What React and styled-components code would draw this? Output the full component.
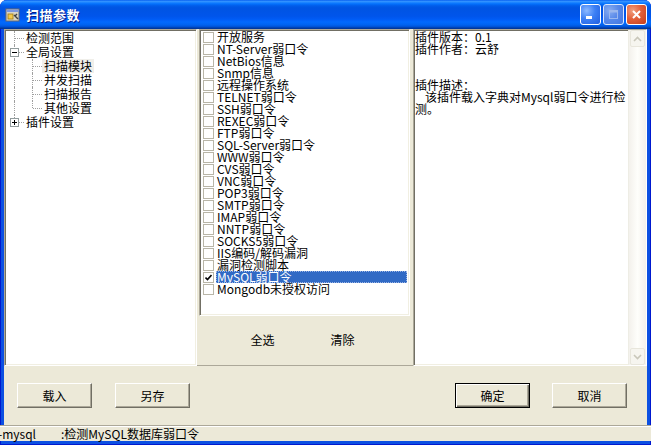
import React from 'react';
import styled, { css, createGlobalStyle } from 'styled-components';

const GlobalStyle = createGlobalStyle`
  html, body {
    margin: 0;
    padding: 0;
    background: #fff;
  }
  body {
    font-family: "Noto Sans CJK SC", "DejaVu Sans", sans-serif;
    font-size: 12px;
    color: #000;
  }
`;

const sunken = css`
  border: 1px solid;
  border-color: #aca899 #fff #fff #aca899;
  box-shadow: inset 1px 1px #716f64, inset -1px -1px #f1efe2;
`;

const Window = styled.div`
  width: 651px;
  height: 445px;
  box-sizing: border-box;
  display: flex;
  flex-direction: column;
  padding-bottom: 4px;
  background: #0c50e2;
  box-shadow: inset 1px 0 #0019cf, inset -1px 0 #0019cf, inset 0 -1px #0019cf;
  border-radius: 7px 7px 0 0;
  overflow: hidden;
`;

const TitleBar = styled.div`
  height: 29px;
  flex: none;
  display: flex;
  align-items: center;
  padding: 0 4px 0 5px;
  background: linear-gradient(
    to bottom,
    #0058ee 0%,
    #3593ff 4%,
    #288eff 7%,
    #127dff 10%,
    #036ffc 14%,
    #0262ee 18%,
    #0057e5 24%,
    #0054e3 30%,
    #0055eb 56%,
    #005bf5 66%,
    #026afe 76%,
    #0062ef 86%,
    #0052d6 92%,
    #0040ab 96%,
    #003092 100%
  );
`;

const TitleText = styled.span`
  margin-left: 5px;
  flex: 1;
  color: #fff;
  font-weight: bold;
  font-size: 13px;
  letter-spacing: 0.5px;
  text-shadow: 1px 1px #0a1883;
`;

const CapButton = styled.div`
  width: 21px;
  height: 21px;
  box-sizing: border-box;
  margin-left: 2px;
  border: 1px solid #fff;
  border-radius: 3px;
  display: flex;
  align-items: center;
  justify-content: center;
  background: ${p =>
    p.$kind === 'close'
      ? 'radial-gradient(circle at 30% 30%, #f0a080 0%, #e3603a 45%, #c33d1a 100%)'
      : p.$kind === 'off'
      ? 'radial-gradient(circle at 30% 30%, #a0bdf3 0%, #6590e8 50%, #4f7bdc 100%)'
      : 'radial-gradient(circle at 30% 30%, #8cb9ff 0%, #3c80f5 45%, #1f5ee0 100%)'};
  opacity: ${p => (p.$kind === 'off' ? 0.85 : 1)};
`;

const Client = styled.div`
  flex: 1;
  margin: 0 4px;
  background: #ece9d8;
  display: flex;
  flex-direction: column;
`;

const Panels = styled.div`
  height: 337px;
  display: flex;
`;

const TreePanel = styled.div`
  width: 193px;
  box-sizing: border-box;
  background: #fff;
  ${sunken};
  padding: 1px;
`;

const TreeRow = styled.div`
  height: 14px;
  display: flex;
  align-items: stretch;
`;

const Gutter = styled.span`
  position: relative;
  width: 18px;
  flex: none;
  &::before {
    content: '';
    display: ${p => (p.$v ? 'block' : 'none')};
    position: absolute;
    left: 8px;
    top: 0;
    height: ${p => (p.$v === 'top' ? '7px' : '14px')};
    border-left: 1px dotted #a0a0a0;
  }
  &::after {
    content: '';
    display: ${p => (p.$h ? 'block' : 'none')};
    position: absolute;
    left: 9px;
    top: 7px;
    width: 9px;
    border-top: 1px dotted #a0a0a0;
  }
`;

const Expander = styled.span`
  position: absolute;
  z-index: 1;
  left: 4px;
  top: 3px;
  width: 9px;
  height: 9px;
  box-sizing: border-box;
  background: #fff;
  border: 1px solid #919b9c;
  &::before {
    content: '';
    position: absolute;
    left: 1px;
    top: 3px;
    width: 5px;
    height: 1px;
    background: #000;
  }
  &::after {
    content: '';
    display: ${p => (p.$plus ? 'block' : 'none')};
    position: absolute;
    left: 3px;
    top: 1px;
    width: 1px;
    height: 5px;
    background: #000;
  }
`;

const TreeLabel = styled.span`
  padding: 0 2px;
  line-height: 14px;
  white-space: nowrap;
  background: ${p => (p.$selected ? '#f0efea' : 'transparent')};
`;

const MiddlePanel = styled.div`
  width: 216px;
  box-sizing: border-box;
  display: flex;
  flex-direction: column;
  padding: 0 3px 3px 2px;
  border-bottom: 1px solid #aca899;
`;

const CheckList = styled.div`
  height: 287px;
  box-sizing: border-box;
  background: #fff;
  ${sunken};
  padding: 1px 2px 1px 2px;
`;

const CheckRow = styled.div`
  height: 12px;
  display: flex;
  align-items: center;
`;

const Box = styled.span`
  width: 11px;
  height: 11px;
  flex: none;
  box-sizing: border-box;
  margin: 0 2px 0 1px;
  border: 1px solid #b9b6a8;
  background: #fff;
  display: flex;
  align-items: center;
  justify-content: center;
`;

const CheckLabel = styled.span`
  flex: 1;
  height: 12px;
  line-height: 12px;
  padding-left: 1px;
  white-space: nowrap;
  box-sizing: border-box;
  ${p =>
    p.$selected &&
    css`
      background: #316ac5;
      color: #fff;
      outline: 1px dotted #9bb4e4;
      outline-offset: -1px;
    `}
`;

const ListButtons = styled.div`
  flex: 1;
  display: flex;
  align-items: center;
  padding-left: 26px;
  gap: 5px;
`;

const FlatButton = styled.div`
  width: 75px;
  height: 25px;
  display: flex;
  align-items: center;
  justify-content: center;
`;

const InfoPanel = styled.div`
  flex: 1;
  display: flex;
  background: #fff;
  ${sunken};
`;

const InfoText = styled.div`
  flex: 1;
  padding: 1px 0 0 1px;
`;

const InfoLine = styled.div`
  height: 12px;
  line-height: 12px;
  white-space: nowrap;
  padding-left: ${p => (p.$indent ? '10px' : '0')};
`;

const ScrollBar = styled.div`
  width: 17px;
  flex: none;
  display: flex;
  flex-direction: column;
  justify-content: space-between;
  background: linear-gradient(to right, #f3f1ec, #fefefb 50%, #f3f1ec);
  border-left: 1px solid #eeede5;
`;

const ScrollArrow = styled.div`
  height: 17px;
  box-sizing: border-box;
  margin: 0 1px;
  border: 1px solid #e8e6dc;
  border-radius: 2px;
  background: #f6f5ef;
  display: flex;
  align-items: center;
  justify-content: center;
`;

const Footer = styled.div`
  flex: 1;
  display: flex;
  align-items: flex-start;
  padding: 17px 20px 0 13px;
`;

const PushButton = styled.div`
  width: 75px;
  height: 25px;
  box-sizing: border-box;
  display: flex;
  align-items: center;
  justify-content: center;
  margin-right: ${p => p.$gap || 0}px;
  background: #ece9d8;
  border: 1px solid;
  border-color: ${p => (p.$default ? '#000' : '#fff #716f64 #716f64 #fff')};
  box-shadow: ${p =>
    p.$default
      ? 'inset 1px 1px #fff, inset -1px -1px #716f64, inset -2px -2px #aca899'
      : 'inset -1px -1px #aca899'};
`;

const Spacer = styled.div`
  flex: 1;
`;

const StatusBar = styled.div`
  height: 16px;
  margin-left: -4px;
  padding-left: 2px;
  box-sizing: border-box;
  display: flex;
  align-items: center;
  background: #ece9d8;
  border-top: 1px solid #aca899;
  box-shadow: inset 0 1px #fff;
  white-space: pre;
`;

const StatusKey = styled.span`
  width: 63px;
  flex: none;
`;

const treeRows = [
  { label: '检测范围', gutters: [{ v: 'full', h: true }] },
  { label: '全局设置', gutters: [{ v: 'full', h: true, box: 'minus' }] },
  { label: '扫描模块', selected: true, gutters: [{ v: 'full' }, { v: 'full', h: true }] },
  { label: '并发扫描', gutters: [{ v: 'full' }, { v: 'full', h: true }] },
  { label: '扫描报告', gutters: [{ v: 'full' }, { v: 'full', h: true }] },
  { label: '其他设置', gutters: [{ v: 'full' }, { v: 'top', h: true }] },
  { label: '插件设置', gutters: [{ v: 'top', h: true, box: 'plus' }] },
];

const plugins = [
  '开放服务',
  'NT-Server弱口令',
  'NetBios信息',
  'Snmp信息',
  '远程操作系统',
  'TELNET弱口令',
  'SSH弱口令',
  'REXEC弱口令',
  'FTP弱口令',
  'SQL-Server弱口令',
  'WWW弱口令',
  'CVS弱口令',
  'VNC弱口令',
  'POP3弱口令',
  'SMTP弱口令',
  'IMAP弱口令',
  'NNTP弱口令',
  'SOCKS5弱口令',
  'IIS编码/解码漏洞',
  '漏洞检测脚本',
  'MySQL弱口令',
  'Mongodb未授权访问',
];

function AppIcon() {
  return (
    <svg width="16" height="16" viewBox="0 0 16 16">
      <rect x="1" y="2" width="13" height="12" fill="#d8d4c4" stroke="#6b6b6b" />
      <rect x="1.5" y="2.5" width="12" height="2.5" fill="#7a96df" />
      <rect x="3" y="7" width="5" height="5" fill="#f2c94c" stroke="#a07a10" strokeWidth="0.8" />
      <path d="M9 8 L13 12 M12 7 L10 9" stroke="#404040" strokeWidth="1.4" />
    </svg>
  );
}

function Arrow({ up }) {
  return (
    <svg width="9" height="6" viewBox="0 0 9 6">
      <path
        d={up ? 'M1 5 L4.5 1.5 L8 5' : 'M1 1 L4.5 4.5 L8 1'}
        fill="none"
        stroke="#c9c7ba"
        strokeWidth="1.6"
      />
    </svg>
  );
}

export default function App() {
  return (
    <>
      <GlobalStyle />
      <Window>
        <TitleBar>
          <AppIcon />
          <TitleText>扫描参数</TitleText>
          <CapButton>
            <svg width="13" height="13" viewBox="0 0 13 13">
              <rect x="2" y="8" width="6" height="3" fill="#fff" />
            </svg>
          </CapButton>
          <CapButton $kind="off">
            <svg width="13" height="13" viewBox="0 0 13 13">
              <rect x="2.5" y="2.5" width="8" height="8" fill="none" stroke="#b7c9ef" />
              <rect x="2.5" y="2.5" width="8" height="2" fill="#b7c9ef" />
            </svg>
          </CapButton>
          <CapButton $kind="close">
            <svg width="13" height="13" viewBox="0 0 13 13">
              <path d="M3 3 L10 10 M10 3 L3 10" stroke="#fff" strokeWidth="2" />
            </svg>
          </CapButton>
        </TitleBar>

        <Client>
          <Panels>
            <TreePanel>
              {treeRows.map(row => (
                <TreeRow key={row.label}>
                  {row.gutters.map((g, i) => (
                    <Gutter key={i} $v={g.v} $h={g.h}>
                      {g.box && <Expander $plus={g.box === 'plus'} />}
                    </Gutter>
                  ))}
                  <TreeLabel $selected={row.selected}>{row.label}</TreeLabel>
                </TreeRow>
              ))}
            </TreePanel>

            <MiddlePanel>
              <CheckList>
                {plugins.map(name => {
                  const on = name === 'MySQL弱口令';
                  return (
                    <CheckRow key={name}>
                      <Box>
                        {on && (
                          <svg width="7" height="7" viewBox="0 0 7 7">
                            <path d="M0.5 3.5 L2.5 5.5 L6.5 1" fill="none" stroke="#000" strokeWidth="1.6" />
                          </svg>
                        )}
                      </Box>
                      <CheckLabel $selected={on}>{name}</CheckLabel>
                    </CheckRow>
                  );
                })}
              </CheckList>
              <ListButtons>
                <FlatButton>全选</FlatButton>
                <FlatButton>清除</FlatButton>
              </ListButtons>
            </MiddlePanel>

            <InfoPanel>
              <InfoText>
                <InfoLine>插件版本：0.1</InfoLine>
                <InfoLine>插件作者：云舒</InfoLine>
                <InfoLine />
                <InfoLine />
                <InfoLine>插件描述：</InfoLine>
                <InfoLine $indent>该插件载入字典对Mysql弱口令进行检</InfoLine>
                <InfoLine>测。</InfoLine>
              </InfoText>
              <ScrollBar>
                <ScrollArrow>
                  <Arrow up />
                </ScrollArrow>
                <ScrollArrow>
                  <Arrow />
                </ScrollArrow>
              </ScrollBar>
            </InfoPanel>
          </Panels>

          <Footer>
            <PushButton $gap={23}>载入</PushButton>
            <PushButton>另存</PushButton>
            <Spacer />
            <PushButton $default $gap={22}>确定</PushButton>
            <PushButton>取消</PushButton>
          </Footer>
        </Client>

        <StatusBar>
          <StatusKey>-mysql</StatusKey>
          <span>:检测MySQL数据库弱口令</span>
        </StatusBar>
      </Window>
    </>
  );
}
